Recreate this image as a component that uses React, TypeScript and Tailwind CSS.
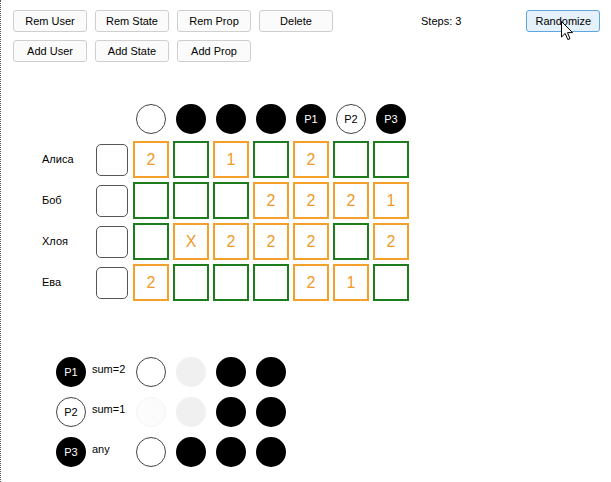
const font = { fontFamily: '"Liberation Sans", Arial, sans-serif' }

type Cell = { v: string; hot: boolean }

const rows: { name: string; cells: Cell[] }[] = [
  {
    name: 'Алиса',
    cells: [
      { v: '2', hot: true },
      { v: '', hot: false },
      { v: '1', hot: true },
      { v: '', hot: false },
      { v: '2', hot: true },
      { v: '', hot: false },
      { v: '', hot: false },
    ],
  },
  {
    name: 'Боб',
    cells: [
      { v: '', hot: false },
      { v: '', hot: false },
      { v: '', hot: false },
      { v: '2', hot: true },
      { v: '2', hot: true },
      { v: '2', hot: true },
      { v: '1', hot: true },
    ],
  },
  {
    name: 'Хлоя',
    cells: [
      { v: '', hot: false },
      { v: 'X', hot: true },
      { v: '2', hot: true },
      { v: '2', hot: true },
      { v: '2', hot: true },
      { v: '', hot: false },
      { v: '2', hot: true },
    ],
  },
  {
    name: 'Ева',
    cells: [
      { v: '2', hot: true },
      { v: '', hot: false },
      { v: '', hot: false },
      { v: '', hot: false },
      { v: '2', hot: true },
      { v: '1', hot: true },
      { v: '', hot: false },
    ],
  },
]

// w = white outlined, b = black, p = pale gray, f = faint
const header = ['w', 'b', 'b', 'b', 'P1', 'P2', 'P3']

const props = [
  { id: 'P1', dark: true, label: 'sum=2', states: ['w', 'p', 'b', 'b'] },
  { id: 'P2', dark: false, label: 'sum=1', states: ['f', 'p', 'b', 'b'] },
  { id: 'P3', dark: true, label: 'any', states: ['w', 'b', 'b', 'b'] },
]

function Button({ label, active = false }: { label: string; active?: boolean }) {
  return (
    <button
      className={
        active
          ? 'w-[74px] h-[22px] rounded-[3px] border border-[#5fa5e0] bg-[#e5f1fb] text-[11px] text-black'
          : 'w-[74px] h-[22px] rounded-[3px] border border-[#cfcfcf] bg-[#fbfbfb] text-[11px] text-black'
      }
      style={font}
    >
      {label}
    </button>
  )
}

function Dot({ kind }: { kind: string }) {
  if (kind === 'b') return <div className="w-[30px] h-[30px] rounded-full bg-black" />
  if (kind === 'p') return <div className="w-[30px] h-[30px] rounded-full bg-[#f0f0f0]" />
  if (kind === 'f') return <div className="w-[30px] h-[30px] rounded-full bg-[#fcfcfc] border border-[#f4f4f4]" />
  if (kind === 'w') return <div className="w-[30px] h-[30px] rounded-full bg-white border border-[#444]" />
  const dark = kind !== 'P2'
  return (
    <div
      className={
        dark
          ? 'w-[30px] h-[30px] rounded-full bg-black text-white text-[11px] flex items-center justify-center'
          : 'w-[30px] h-[30px] rounded-full bg-white border border-[#444] text-black text-[11px] flex items-center justify-center'
      }
      style={font}
    >
      {kind}
    </div>
  )
}

export default function App() {
  return (
    <div className="relative w-[611px] h-[482px] bg-white border-l border-dotted border-[#555] overflow-hidden" style={font}>
      {/* toolbar */}
      <div className="pt-[10px] pl-[12px] flex flex-col gap-[8px]">
        <div className="flex items-center h-[22px]">
          <div className="flex gap-[8px]">
            <Button label="Rem User" />
            <Button label="Rem State" />
            <Button label="Rem Prop" />
            <Button label="Delete" />
          </div>
          <span className="ml-[88px] text-[11px] text-black">Steps: 3</span>
          <div className="ml-[65px] flex">
            <Button label="Randomize" active />
          </div>
        </div>
        <div className="flex gap-[8px]">
          <Button label="Add User" />
          <Button label="Add State" />
          <Button label="Add Prop" />
        </div>
      </div>

      {/* state grid */}
      <div className="mt-[42px] ml-[41px]">
        <div className="flex gap-[4px] pl-[91px] mb-[7px]">
          {header.map((h, i) => (
            <div key={i} className="w-[36px] flex justify-center">
              <Dot kind={h} />
            </div>
          ))}
        </div>
        <div className="flex flex-col gap-[4px]">
          {rows.map((r) => (
            <div key={r.name} className="flex items-center h-[37px]">
              <span className="w-[54px] text-[11px] text-black">{r.name}</span>
              <div className="w-[32px] h-[32px] rounded-[5px] border border-[#555] bg-white" />
              <div className="ml-[5px] flex gap-[4px]">
                {r.cells.map((c, i) => (
                  <div
                    key={i}
                    className={
                      c.hot
                        ? 'w-[36px] h-[37px] border-2 border-[#f5a02a] flex items-center justify-center text-[16px] text-[#f09a2a]'
                        : 'w-[36px] h-[37px] border-2 border-[#1d7d1d] flex items-center justify-center'
                    }
                  >
                    {c.v}
                  </div>
                ))}
              </div>
            </div>
          ))}
        </div>
      </div>

      {/* properties */}
      <div className="mt-[56px] ml-[55px] flex flex-col gap-[10px]">
        {props.map((p) => (
          <div key={p.id} className="flex items-center h-[30px]">
            <Dot kind={p.id} />
            <span className="w-[50px] pl-[6px] mb-[6px] text-[11px] text-black">{p.label}</span>
            <div className="flex gap-[10px]">
              {p.states.map((s, i) => (
                <Dot key={i} kind={s} />
              ))}
            </div>
          </div>
        ))}
      </div>

      {/* mouse cursor */}
      <svg className="absolute left-[560px] top-[21px]" width="13" height="20" viewBox="0 0 13 20">
        <path d="M0.5 0.5 L0.5 16 L4.2 12.4 L6.8 18.6 L9 17.7 L6.5 11.6 L11.5 11.6 Z" fill="white" stroke="black" strokeWidth="1" />
      </svg>
    </div>
  )
}
